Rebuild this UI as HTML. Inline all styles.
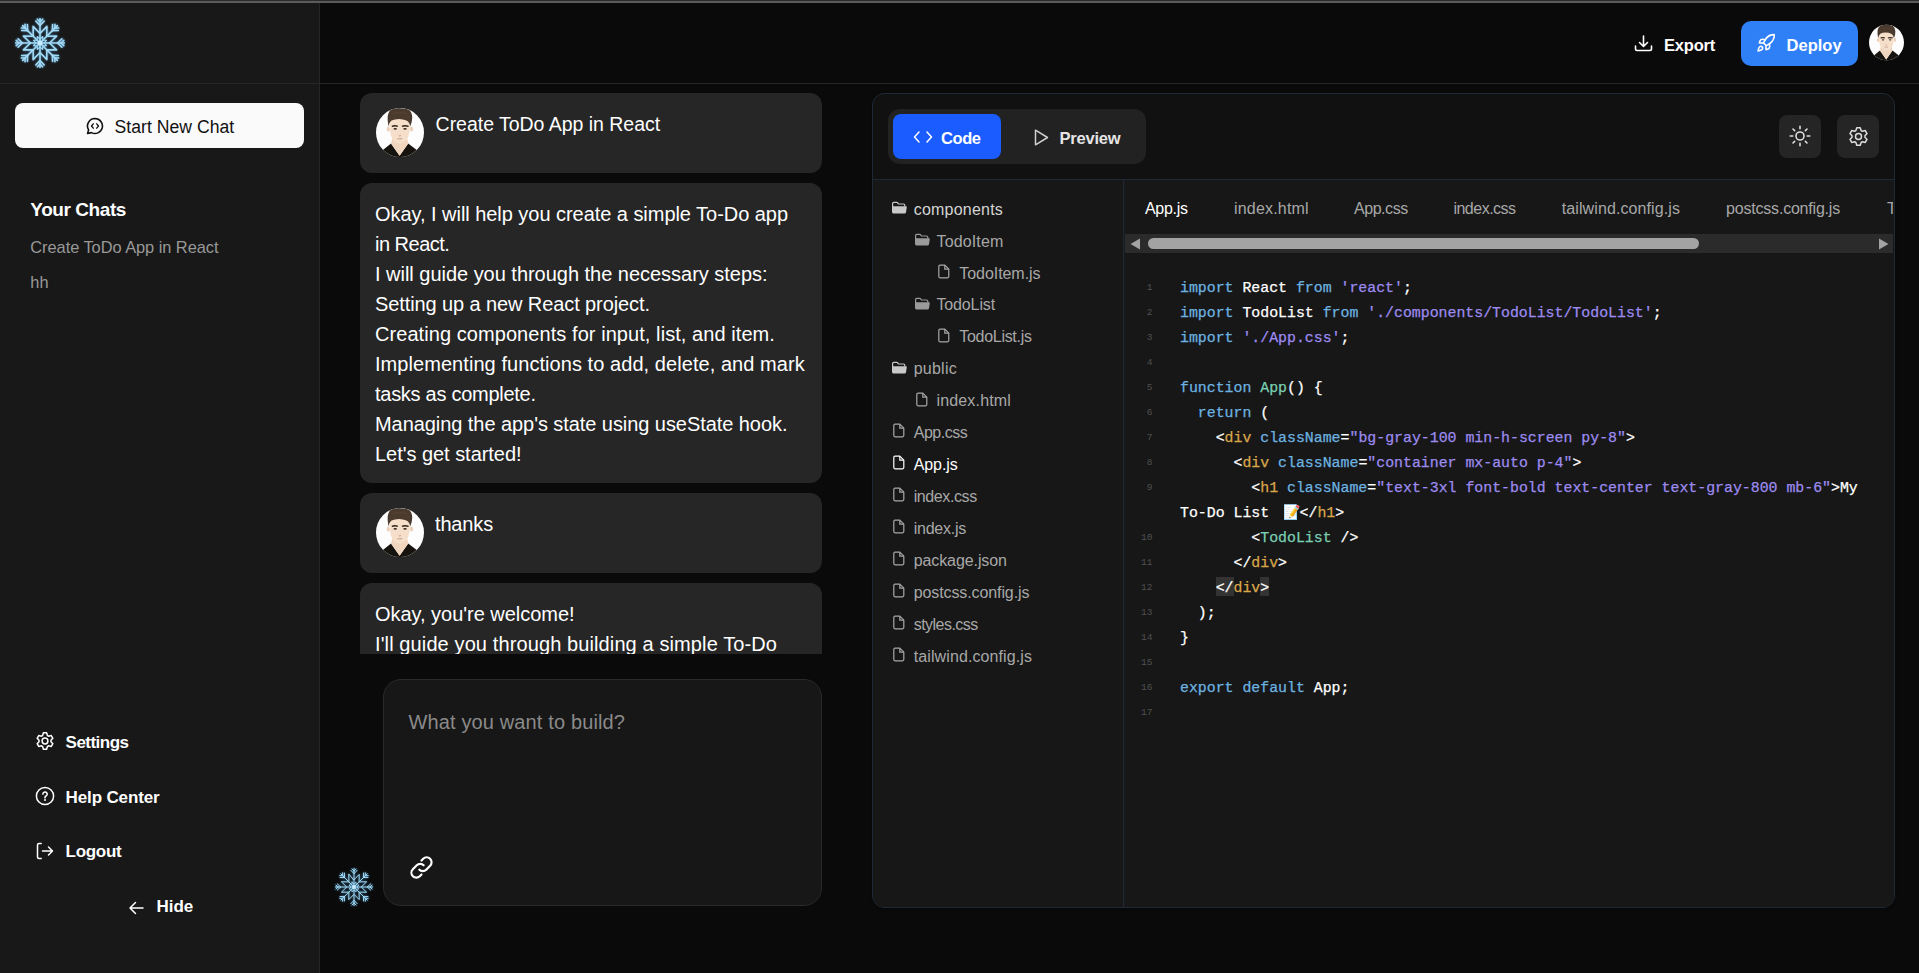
<!DOCTYPE html>
<html><head><meta charset="utf-8"><style>
*{box-sizing:border-box;margin:0;padding:0}
html,body{width:1919px;height:973px;overflow:hidden;background:#0a0a0a;font-family:"Liberation Sans",sans-serif;color:#fff;position:relative}
.abs{position:absolute}
.t{position:absolute;white-space:pre;line-height:1}
.code{position:absolute;left:1180px;font-family:"Liberation Mono",monospace;font-size:14.87px;line-height:25px;white-space:pre;color:#fff;-webkit-text-stroke:0.25px currentColor}
.ln{position:absolute;font-family:"Liberation Mono",monospace;font-size:9.6px;color:#505050;white-space:pre;line-height:1}
.kw{color:#6db3e0}.str{color:#9d8bf0}.tag{color:#d9a74a}.attr{color:#6db3e0}.comp{color:#7ad0b2}
</style></head><body>
<div class="abs" style="left:0px;top:0px;width:1919px;height:1px;background:#2c2c2c;border-radius:0px;"></div>
<div class="abs" style="left:0px;top:1px;width:1919px;height:2px;background:#5b5b5b;border-radius:0px;"></div>
<div class="abs" style="left:0px;top:3px;width:319px;height:970px;background:#181818;border-radius:0px;"></div>
<div class="abs" style="left:319px;top:3px;width:1px;height:970px;background:#262626;border-radius:0px;"></div>
<div class="abs" style="left:0px;top:83px;width:1919px;height:1px;background:#262626;border-radius:0px;"></div>
<svg class="abs" style="left:15.0px;top:18.0px;filter:drop-shadow(0 0 0.8px #4a90c0)" width="50" height="50" viewBox="0 0 50 50" fill="none"><g transform="translate(25.0,25.0) scale(1.0)" stroke="#a3d9f3" stroke-width="1.6" stroke-linecap="round" stroke-linejoin="round"><line x1="0" y1="0" x2="0.00" y2="-24.50"/><line x1="0.00" y1="-17.50" x2="4.12" y2="-21.90"/><line x1="0.00" y1="-17.50" x2="-4.12" y2="-21.90"/><line x1="0.00" y1="-21.00" x2="2.62" y2="-23.80"/><line x1="0.00" y1="-21.00" x2="-2.62" y2="-23.80"/><line x1="0" y1="0" x2="17.32" y2="-17.32"/><line x1="12.37" y1="-12.37" x2="18.40" y2="-12.57"/><line x1="12.37" y1="-12.37" x2="12.57" y2="-18.40"/><line x1="14.85" y1="-14.85" x2="18.69" y2="-14.97"/><line x1="14.85" y1="-14.85" x2="14.97" y2="-18.69"/><line x1="0" y1="0" x2="24.50" y2="-0.00"/><line x1="17.50" y1="-0.00" x2="21.90" y2="4.12"/><line x1="17.50" y1="-0.00" x2="21.90" y2="-4.13"/><line x1="21.00" y1="-0.00" x2="23.80" y2="2.62"/><line x1="21.00" y1="-0.00" x2="23.80" y2="-2.63"/><line x1="0" y1="0" x2="17.32" y2="17.32"/><line x1="12.37" y1="12.37" x2="12.57" y2="18.40"/><line x1="12.37" y1="12.37" x2="18.40" y2="12.57"/><line x1="14.85" y1="14.85" x2="14.97" y2="18.69"/><line x1="14.85" y1="14.85" x2="18.69" y2="14.97"/><line x1="0" y1="0" x2="0.00" y2="24.50"/><line x1="0.00" y1="17.50" x2="-4.12" y2="21.90"/><line x1="0.00" y1="17.50" x2="4.13" y2="21.90"/><line x1="0.00" y1="21.00" x2="-2.62" y2="23.80"/><line x1="0.00" y1="21.00" x2="2.63" y2="23.80"/><line x1="0" y1="0" x2="-17.32" y2="17.32"/><line x1="-12.37" y1="12.37" x2="-18.40" y2="12.57"/><line x1="-12.37" y1="12.37" x2="-12.57" y2="18.40"/><line x1="-14.85" y1="14.85" x2="-18.69" y2="14.97"/><line x1="-14.85" y1="14.85" x2="-14.97" y2="18.69"/><line x1="0" y1="0" x2="-24.50" y2="0.00"/><line x1="-17.50" y1="0.00" x2="-21.90" y2="-4.12"/><line x1="-17.50" y1="0.00" x2="-21.90" y2="4.13"/><line x1="-21.00" y1="0.00" x2="-23.80" y2="-2.62"/><line x1="-21.00" y1="0.00" x2="-23.80" y2="2.63"/><line x1="0" y1="0" x2="-17.32" y2="-17.32"/><line x1="-12.37" y1="-12.37" x2="-12.57" y2="-18.40"/><line x1="-12.37" y1="-12.37" x2="-18.40" y2="-12.57"/><line x1="-14.85" y1="-14.85" x2="-14.97" y2="-18.69"/><line x1="-14.85" y1="-14.85" x2="-18.69" y2="-14.97"/><polygon points="0.00,-9.50 6.89,-16.63 6.72,-6.72 16.63,-6.89 9.50,-0.00 16.63,6.89 6.72,6.72 6.89,16.63 0.00,9.50 -6.89,16.63 -6.72,6.72 -16.63,6.89 -9.50,0.00 -16.63,-6.89 -6.72,-6.72 -6.89,-16.63"/><polygon points="0.00,-4.00 2.68,-6.47 2.83,-2.83 6.47,-2.68 4.00,-0.00 6.47,2.68 2.83,2.83 2.68,6.47 0.00,4.00 -2.68,6.47 -2.83,2.83 -6.47,2.68 -4.00,0.00 -6.47,-2.68 -2.83,-2.83 -2.68,-6.47" stroke-width="1.1"/><circle cx="0" cy="0" r="2.5" fill="#c8ecff" stroke="none"/></g></svg>
<div class="abs" style="left:15px;top:103px;width:289px;height:45px;background:#fafafa;border-radius:8px;"></div>
<svg class="abs" style="left:86px;top:117px;" width="18" height="18" viewBox="0 0 18 18" fill="none"><path d="M9 1.5a7.5 7.5 0 1 1-3.6 14.1L1.6 16.5l1-3.6A7.5 7.5 0 0 1 9 1.5z" stroke="#111" stroke-width="1.6" stroke-linejoin="round"/><path d="M7.3 6.8L5.5 9l1.8 2.2M10.7 6.8L12.5 9l-1.8 2.2" stroke="#111" stroke-width="1.3" stroke-linecap="round" stroke-linejoin="round"/></svg>
<div class="t" id="f0" style="left:114.50px;top:118.80px;font-size:17.6px;color:#111;font-weight:400;letter-spacing:0.031px;">Start New Chat</div>
<div class="t" id="f1" style="left:30.30px;top:199.72px;font-size:19px;color:#fff;font-weight:700;letter-spacing:-0.428px;">Your Chats</div>
<div class="t" id="f2" style="left:30.30px;top:238.92px;font-size:16.4px;color:#989898;font-weight:400;letter-spacing:-0.043px;">Create ToDo App in React</div>
<div class="t" style="left:30.30px;top:274.12px;font-size:16.4px;color:#989898;font-weight:400;letter-spacing:0.000px;">hh</div>
<svg class="abs" style="left:35px;top:731px;" width="20" height="20" viewBox="0 0 20 20" fill="none"><path d="M7.56 4.52 L8.42 1.85 L11.58 1.85 L12.44 4.52 L13.53 5.15 L16.26 4.55 L17.85 7.30 L15.97 9.37 L15.97 10.63 L17.85 12.70 L16.26 15.45 L13.53 14.85 L12.44 15.48 L11.58 18.15 L8.42 18.15 L7.56 15.48 L6.47 14.85 L3.74 15.45 L2.15 12.70 L4.03 10.63 L4.03 9.37 L2.15 7.30 L3.74 4.55 L6.47 5.15Z" stroke="#fff" stroke-width="1.5" stroke-linejoin="round"/><circle cx="10" cy="10" r="2.9" stroke="#fff" stroke-width="1.5"/></svg>
<div class="t" id="f3" style="left:65.60px;top:733.61px;font-size:17px;color:#fff;font-weight:700;letter-spacing:-0.529px;">Settings</div>
<svg class="abs" style="left:35px;top:786px;" width="20" height="20" viewBox="0 0 20 20" fill="none"><circle cx="10" cy="10" r="8.6" stroke="#fff" stroke-width="1.5"/><path d="M7.9 8.1a2.15 2.15 0 1 1 3.1 1.95c-.65.35-1 .8-1 1.45v.35" stroke="#fff" stroke-width="1.6" stroke-linecap="round"/><circle cx="10" cy="14.1" r="1" fill="#fff"/></svg>
<div class="t" id="f4" style="left:65.60px;top:788.61px;font-size:17px;color:#fff;font-weight:700;letter-spacing:-0.140px;">Help Center</div>
<svg class="abs" style="left:35px;top:842px;" width="20" height="18" viewBox="0 0 20 18" fill="none"><path d="M6.2 1.5H4Q2.5 1.5 2.5 3V15Q2.5 16.5 4 16.5H6.2" stroke="#fff" stroke-width="1.5" stroke-linecap="round" stroke-linejoin="round"/><path d="M7.5 9h10M13.5 5l4 4-4 4" stroke="#fff" stroke-width="1.5" stroke-linecap="round" stroke-linejoin="round"/></svg>
<div class="t" id="f5" style="left:65.60px;top:842.61px;font-size:17px;color:#fff;font-weight:700;letter-spacing:-0.300px;">Logout</div>
<svg class="abs" style="left:128px;top:900px;" width="16" height="16" viewBox="0 0 16 16" fill="none"><path d="M15 8H2M7.5 2.5L2 8l5.5 5.5" stroke="#fff" stroke-width="1.5" stroke-linecap="round" stroke-linejoin="round"/></svg>
<div class="t" id="f6" style="left:156.60px;top:898.11px;font-size:17px;color:#fff;font-weight:700;letter-spacing:-0.100px;">Hide</div>
<svg class="abs" style="left:1634px;top:35px;" width="19" height="17" viewBox="0 0 19 17" fill="none"><path d="M9.5 1v10M5.5 7.5l4 4 4-4" stroke="#fff" stroke-width="1.6" stroke-linecap="round" stroke-linejoin="round"/><path d="M1.5 11v2.8q0 1.7 1.7 1.7h12.6q1.7 0 1.7-1.7V11" stroke="#fff" stroke-width="1.6" stroke-linecap="round" stroke-linejoin="round"/></svg>
<div class="t" id="f7" style="left:1664.00px;top:37.03px;font-size:16.5px;color:#fff;font-weight:700;letter-spacing:-0.200px;">Export</div>
<div class="abs" style="left:1741px;top:21px;width:117px;height:45px;background:#2f80f7;border-radius:10px;"></div>
<svg class="abs" style="left:1756px;top:33px;" width="20" height="20" viewBox="0 0 24 24" fill="none"><g stroke="#fff" stroke-width="1.9" stroke-linecap="round" stroke-linejoin="round"><path d="M4.5 16.5c-1.5 1.26-2 5-2 5s3.74-.5 5-2c.71-.84.7-2.13-.09-2.91a2.18 2.18 0 0 0-2.91-.09z"/><path d="m12 15-3-3a22 22 0 0 1 2-3.95A12.88 12.88 0 0 1 22 2c0 2.72-.78 7.5-6 11a22.35 22.35 0 0 1-4 2z"/><path d="M9 12H4s.55-3.03 2-4c1.62-1.08 5 0 5 0"/><path d="M12 15v5s3.03-.55 4-2c1.08-1.62 0-5 0-5"/></g></svg>
<div class="t" id="f8" style="left:1786.60px;top:37.03px;font-size:16.5px;color:#fff;font-weight:700;letter-spacing:0.000px;">Deploy</div>
<svg class="abs" style="left:1869px;top:23.5px;" width="35" height="37" viewBox="0 0 48 49" fill="none"><defs><clipPath id="a1869_23"><ellipse cx="24" cy="24.5" rx="24" ry="24.5"/></clipPath></defs>
<ellipse cx="24" cy="24.5" rx="24" ry="24.5" fill="#fdfdfd"/>
<g clip-path="url(#a1869_23)">
<path d="M-2 52 L1 44 Q4 42.8 6.3 42.5 L15 35.6 L23.6 47.7 L32.2 35.6 L41.4 42.5 Q44 42.8 47 44 L50 52 Z" fill="#17140f"/>
<path d="M16.5 29 L31 29 L32.2 35.6 L23.6 47.7 L15 35.6 Z" fill="#f0d6bf"/>
<ellipse cx="12.3" cy="21" rx="1.6" ry="2.6" fill="#ecd0b8"/><ellipse cx="35.6" cy="21" rx="1.6" ry="2.6" fill="#ecd0b8"/>
<path d="M13.4 9 Q13 26 16.7 31.6 Q19.5 35.6 23.6 35.8 Q27.8 35.6 31 31.6 Q34.6 26 34.2 9 Z" fill="#f5dfcb"/>
<path d="M12.6 18.5 Q11.2 12 11.8 7.5 Q13 2.5 16 1.1 Q20 -0.3 24.7 0.3 Q29.5 0.3 32.8 1.7 Q36 4 36.2 9.2 Q36.4 13.5 34.2 18.5 Q33.8 14.5 30.5 12.6 Q27 10.9 23 10.9 Q18.5 11 15.5 12.6 Q13.2 14.2 12.6 18.5 Z" fill="#4b3a2e"/>
<path d="M17 6 Q22 3.5 30 5.5" stroke="#5e4a3c" stroke-width="0.7" fill="none"/>
<path d="M15.8 18.4 Q18.8 17.3 21.8 18.3 M25.9 18.3 Q29 17.3 32.6 18.4" stroke="#2e2119" stroke-width="1.4" fill="none"/>
<ellipse cx="19.2" cy="20.8" rx="1.8" ry="0.85" fill="#3a2a20"/><ellipse cx="29" cy="20.8" rx="1.8" ry="0.85" fill="#3a2a20"/>
<path d="M22.8 27.6 Q23.8 28.4 24.8 27.6 M21.4 30.6 Q23.8 31.3 26.2 30.6" stroke="#b08a78" stroke-width="0.8" fill="none"/>
</g></svg>
<div class="abs" style="left:360px;top:93px;width:462px;height:80px;background:#262626;border-radius:12px;"></div>
<svg class="abs" style="left:376px;top:108px;" width="48" height="49" viewBox="0 0 48 49" fill="none"><defs><clipPath id="a376_108"><ellipse cx="24" cy="24.5" rx="24" ry="24.5"/></clipPath></defs>
<ellipse cx="24" cy="24.5" rx="24" ry="24.5" fill="#fdfdfd"/>
<g clip-path="url(#a376_108)">
<path d="M-2 52 L1 44 Q4 42.8 6.3 42.5 L15 35.6 L23.6 47.7 L32.2 35.6 L41.4 42.5 Q44 42.8 47 44 L50 52 Z" fill="#17140f"/>
<path d="M16.5 29 L31 29 L32.2 35.6 L23.6 47.7 L15 35.6 Z" fill="#f0d6bf"/>
<ellipse cx="12.3" cy="21" rx="1.6" ry="2.6" fill="#ecd0b8"/><ellipse cx="35.6" cy="21" rx="1.6" ry="2.6" fill="#ecd0b8"/>
<path d="M13.4 9 Q13 26 16.7 31.6 Q19.5 35.6 23.6 35.8 Q27.8 35.6 31 31.6 Q34.6 26 34.2 9 Z" fill="#f5dfcb"/>
<path d="M12.6 18.5 Q11.2 12 11.8 7.5 Q13 2.5 16 1.1 Q20 -0.3 24.7 0.3 Q29.5 0.3 32.8 1.7 Q36 4 36.2 9.2 Q36.4 13.5 34.2 18.5 Q33.8 14.5 30.5 12.6 Q27 10.9 23 10.9 Q18.5 11 15.5 12.6 Q13.2 14.2 12.6 18.5 Z" fill="#4b3a2e"/>
<path d="M17 6 Q22 3.5 30 5.5" stroke="#5e4a3c" stroke-width="0.7" fill="none"/>
<path d="M15.8 18.4 Q18.8 17.3 21.8 18.3 M25.9 18.3 Q29 17.3 32.6 18.4" stroke="#2e2119" stroke-width="1.4" fill="none"/>
<ellipse cx="19.2" cy="20.8" rx="1.8" ry="0.85" fill="#3a2a20"/><ellipse cx="29" cy="20.8" rx="1.8" ry="0.85" fill="#3a2a20"/>
<path d="M22.8 27.6 Q23.8 28.4 24.8 27.6 M21.4 30.6 Q23.8 31.3 26.2 30.6" stroke="#b08a78" stroke-width="0.8" fill="none"/>
</g></svg>
<div class="t" id="f9" style="left:435.60px;top:115.49px;font-size:19.5px;color:#fff;font-weight:400;letter-spacing:-0.026px;">Create ToDo App in React</div>
<div class="abs" style="left:360px;top:183px;width:462px;height:300px;background:#262626;border-radius:12px;"></div>
<div class="t" id="f10" style="left:375.00px;top:204.07px;font-size:20px;color:#fff;font-weight:400;letter-spacing:-0.043px;">Okay, I will help you create a simple To-Do app</div>
<div class="t" id="f11" style="left:375.00px;top:234.07px;font-size:20px;color:#fff;font-weight:400;letter-spacing:-0.500px;">in React.</div>
<div class="t" id="f12" style="left:375.00px;top:264.07px;font-size:20px;color:#fff;font-weight:400;letter-spacing:-0.023px;">I will guide you through the necessary steps:</div>
<div class="t" id="f13" style="left:375.00px;top:294.07px;font-size:20px;color:#fff;font-weight:400;letter-spacing:-0.100px;">Setting up a new React project.</div>
<div class="t" id="f14" style="left:375.00px;top:324.07px;font-size:20px;color:#fff;font-weight:400;letter-spacing:0.067px;">Creating components for input, list, and item.</div>
<div class="t" id="f15" style="left:375.00px;top:354.07px;font-size:20px;color:#fff;font-weight:400;letter-spacing:0.061px;">Implementing functions to add, delete, and mark</div>
<div class="t" id="f16" style="left:375.00px;top:384.07px;font-size:20px;color:#fff;font-weight:400;letter-spacing:-0.271px;">tasks as complete.</div>
<div class="t" id="f17" style="left:375.00px;top:414.07px;font-size:20px;color:#fff;font-weight:400;letter-spacing:-0.062px;">Managing the app&#39;s state using useState hook.</div>
<div class="t" id="f18" style="left:375.00px;top:444.07px;font-size:20px;color:#fff;font-weight:400;letter-spacing:-0.038px;">Let&#39;s get started!</div>
<div class="abs" style="left:360px;top:493px;width:462px;height:80px;background:#262626;border-radius:12px;"></div>
<svg class="abs" style="left:376px;top:508px;" width="48" height="49" viewBox="0 0 48 49" fill="none"><defs><clipPath id="a376_508"><ellipse cx="24" cy="24.5" rx="24" ry="24.5"/></clipPath></defs>
<ellipse cx="24" cy="24.5" rx="24" ry="24.5" fill="#fdfdfd"/>
<g clip-path="url(#a376_508)">
<path d="M-2 52 L1 44 Q4 42.8 6.3 42.5 L15 35.6 L23.6 47.7 L32.2 35.6 L41.4 42.5 Q44 42.8 47 44 L50 52 Z" fill="#17140f"/>
<path d="M16.5 29 L31 29 L32.2 35.6 L23.6 47.7 L15 35.6 Z" fill="#f0d6bf"/>
<ellipse cx="12.3" cy="21" rx="1.6" ry="2.6" fill="#ecd0b8"/><ellipse cx="35.6" cy="21" rx="1.6" ry="2.6" fill="#ecd0b8"/>
<path d="M13.4 9 Q13 26 16.7 31.6 Q19.5 35.6 23.6 35.8 Q27.8 35.6 31 31.6 Q34.6 26 34.2 9 Z" fill="#f5dfcb"/>
<path d="M12.6 18.5 Q11.2 12 11.8 7.5 Q13 2.5 16 1.1 Q20 -0.3 24.7 0.3 Q29.5 0.3 32.8 1.7 Q36 4 36.2 9.2 Q36.4 13.5 34.2 18.5 Q33.8 14.5 30.5 12.6 Q27 10.9 23 10.9 Q18.5 11 15.5 12.6 Q13.2 14.2 12.6 18.5 Z" fill="#4b3a2e"/>
<path d="M17 6 Q22 3.5 30 5.5" stroke="#5e4a3c" stroke-width="0.7" fill="none"/>
<path d="M15.8 18.4 Q18.8 17.3 21.8 18.3 M25.9 18.3 Q29 17.3 32.6 18.4" stroke="#2e2119" stroke-width="1.4" fill="none"/>
<ellipse cx="19.2" cy="20.8" rx="1.8" ry="0.85" fill="#3a2a20"/><ellipse cx="29" cy="20.8" rx="1.8" ry="0.85" fill="#3a2a20"/>
<path d="M22.8 27.6 Q23.8 28.4 24.8 27.6 M21.4 30.6 Q23.8 31.3 26.2 30.6" stroke="#b08a78" stroke-width="0.8" fill="none"/>
</g></svg>
<div class="t" id="f19" style="left:435.00px;top:514.07px;font-size:20px;color:#fff;font-weight:400;letter-spacing:-0.160px;">thanks</div>
<div class="abs" style="left:360px;top:583px;width:462px;height:71px;overflow:hidden"><div class="abs" style="left:0;top:0;width:462px;height:120px;background:#262626;border-radius:12px"></div><div class="t" id="f20" style="left:15.00px;top:21.47px;font-size:20px;color:#fff;font-weight:400;letter-spacing:-0.033px;">Okay, you&#39;re welcome!</div><div class="t" id="f21" style="left:15.00px;top:51.37px;font-size:20px;color:#fff;font-weight:400;letter-spacing:0.110px;">I&#39;ll guide you through building a simple To-Do</div></div>
<div class="abs" style="left:383px;top:679px;width:439px;height:227px;background:#171717;border-radius:18px;border:1px solid #2a2a2a"></div>
<div class="t" id="f22" style="left:408.50px;top:711.57px;font-size:20px;color:#8a8a8a;font-weight:400;letter-spacing:0.136px;">What you want to build?</div>
<svg class="abs" style="left:407.8px;top:853.8px;" width="27" height="27" viewBox="0 0 25 25" fill="none"><path d="M10.5 14.5a4.5 4.5 0 0 0 6.4 0l3.6-3.6a4.5 4.5 0 0 0-6.4-6.4l-1.6 1.6" stroke="#fff" stroke-width="2" stroke-linecap="round"/><path d="M14.5 10.5a4.5 4.5 0 0 0-6.4 0l-3.6 3.6a4.5 4.5 0 0 0 6.4 6.4l1.6-1.6" stroke="#fff" stroke-width="2" stroke-linecap="round"/></svg>
<svg class="abs" style="left:335.0px;top:868.0px;filter:drop-shadow(0 0 0.8px #4a90c0)" width="38" height="38" viewBox="0 0 38 38" fill="none"><g transform="translate(19.0,19.0) scale(0.76)" stroke="#a3d9f3" stroke-width="1.3" stroke-linecap="round" stroke-linejoin="round"><line x1="0" y1="0" x2="0.00" y2="-24.50"/><line x1="0.00" y1="-17.50" x2="4.12" y2="-21.90"/><line x1="0.00" y1="-17.50" x2="-4.12" y2="-21.90"/><line x1="0.00" y1="-21.00" x2="2.62" y2="-23.80"/><line x1="0.00" y1="-21.00" x2="-2.62" y2="-23.80"/><line x1="0" y1="0" x2="17.32" y2="-17.32"/><line x1="12.37" y1="-12.37" x2="18.40" y2="-12.57"/><line x1="12.37" y1="-12.37" x2="12.57" y2="-18.40"/><line x1="14.85" y1="-14.85" x2="18.69" y2="-14.97"/><line x1="14.85" y1="-14.85" x2="14.97" y2="-18.69"/><line x1="0" y1="0" x2="24.50" y2="-0.00"/><line x1="17.50" y1="-0.00" x2="21.90" y2="4.12"/><line x1="17.50" y1="-0.00" x2="21.90" y2="-4.13"/><line x1="21.00" y1="-0.00" x2="23.80" y2="2.62"/><line x1="21.00" y1="-0.00" x2="23.80" y2="-2.63"/><line x1="0" y1="0" x2="17.32" y2="17.32"/><line x1="12.37" y1="12.37" x2="12.57" y2="18.40"/><line x1="12.37" y1="12.37" x2="18.40" y2="12.57"/><line x1="14.85" y1="14.85" x2="14.97" y2="18.69"/><line x1="14.85" y1="14.85" x2="18.69" y2="14.97"/><line x1="0" y1="0" x2="0.00" y2="24.50"/><line x1="0.00" y1="17.50" x2="-4.12" y2="21.90"/><line x1="0.00" y1="17.50" x2="4.13" y2="21.90"/><line x1="0.00" y1="21.00" x2="-2.62" y2="23.80"/><line x1="0.00" y1="21.00" x2="2.63" y2="23.80"/><line x1="0" y1="0" x2="-17.32" y2="17.32"/><line x1="-12.37" y1="12.37" x2="-18.40" y2="12.57"/><line x1="-12.37" y1="12.37" x2="-12.57" y2="18.40"/><line x1="-14.85" y1="14.85" x2="-18.69" y2="14.97"/><line x1="-14.85" y1="14.85" x2="-14.97" y2="18.69"/><line x1="0" y1="0" x2="-24.50" y2="0.00"/><line x1="-17.50" y1="0.00" x2="-21.90" y2="-4.12"/><line x1="-17.50" y1="0.00" x2="-21.90" y2="4.13"/><line x1="-21.00" y1="0.00" x2="-23.80" y2="-2.62"/><line x1="-21.00" y1="0.00" x2="-23.80" y2="2.63"/><line x1="0" y1="0" x2="-17.32" y2="-17.32"/><line x1="-12.37" y1="-12.37" x2="-12.57" y2="-18.40"/><line x1="-12.37" y1="-12.37" x2="-18.40" y2="-12.57"/><line x1="-14.85" y1="-14.85" x2="-14.97" y2="-18.69"/><line x1="-14.85" y1="-14.85" x2="-18.69" y2="-14.97"/><polygon points="0.00,-9.50 6.89,-16.63 6.72,-6.72 16.63,-6.89 9.50,-0.00 16.63,6.89 6.72,6.72 6.89,16.63 0.00,9.50 -6.89,16.63 -6.72,6.72 -16.63,6.89 -9.50,0.00 -16.63,-6.89 -6.72,-6.72 -6.89,-16.63"/><polygon points="0.00,-4.00 2.68,-6.47 2.83,-2.83 6.47,-2.68 4.00,-0.00 6.47,2.68 2.83,2.83 2.68,6.47 0.00,4.00 -2.68,6.47 -2.83,2.83 -6.47,2.68 -4.00,0.00 -6.47,-2.68 -2.83,-2.83 -2.68,-6.47" stroke-width="1.1"/><circle cx="0" cy="0" r="2.5" fill="#c8ecff" stroke="none"/></g></svg>
<div class="abs" style="left:872px;top:93px;width:1023px;height:815px;background:#111111;border-radius:12px;border:1px solid #1e2836;box-shadow:0 1px 3px rgba(0,0,0,.3)"></div>
<div class="abs" style="left:873px;top:180px;width:1021px;height:727px;background:#171717;border-radius:0px;border-radius:0 0 11px 11px"></div>
<div class="abs" style="left:873px;top:179px;width:1021px;height:1px;background:#1e2836;border-radius:0px;"></div>
<div class="abs" style="left:1123px;top:180px;width:1px;height:727px;background:#1e2836;border-radius:0px;"></div>
<div class="abs" style="left:1124px;top:180px;width:1px;height:727px;background:#1b1a19;border-radius:0px;"></div>
<div class="abs" style="left:888px;top:109px;width:258px;height:55px;background:#222222;border-radius:12px;"></div>
<div class="abs" style="left:893px;top:114px;width:108px;height:45px;background:#1a5cff;border-radius:8px;"></div>
<svg class="abs" style="left:913px;top:131px;" width="20" height="12" viewBox="0 0 20 12" fill="none"><path d="M6 1L1.5 6 6 11M14 1l4.5 5L14 11" stroke="#fff" stroke-width="1.5" stroke-linecap="round" stroke-linejoin="round"/></svg>
<div class="t" id="f23" style="left:941.00px;top:129.93px;font-size:16.5px;color:#fff;font-weight:700;letter-spacing:-0.400px;">Code</div>
<svg class="abs" style="left:1034px;top:129px;" width="15" height="17" viewBox="0 0 15 17" fill="none"><path d="M1.5 1.2v14.6L13.5 8.5z" stroke="#d0d0d0" stroke-width="1.5" stroke-linejoin="round"/></svg>
<div class="t" id="f24" style="left:1059.60px;top:129.93px;font-size:16.5px;color:#e5e5e5;font-weight:700;letter-spacing:-0.233px;">Preview</div>
<div class="abs" style="left:1779px;top:115px;width:42px;height:43px;background:#252525;border-radius:8px;"></div>
<svg class="abs" style="left:1789px;top:125px;" width="22" height="22" viewBox="0 0 22 22" fill="none"><circle cx="11" cy="11" r="4" stroke="#ddd" stroke-width="1.6"/><path d="M11 1.2v2.6M11 18.2v2.6M1.2 11h2.6M18.2 11h2.6M4 4l1.6 1.6M16.4 16.4L18 18M4 18l1.6-1.6M16.4 5.6L18 4" stroke="#ddd" stroke-width="1.6" stroke-linecap="round"/></svg>
<div class="abs" style="left:1837px;top:115px;width:42px;height:43px;background:#252525;border-radius:8px;"></div>
<svg class="abs" style="left:1848px;top:126px;" width="21" height="21" viewBox="0 0 21 21" fill="none"><path d="M7.86 4.56 L8.78 1.67 L12.22 1.67 L13.14 4.56 L14.32 5.24 L17.29 4.60 L19.01 7.57 L16.96 9.82 L16.96 11.18 L19.01 13.43 L17.29 16.40 L14.32 15.76 L13.14 16.44 L12.22 19.33 L8.78 19.33 L7.86 16.44 L6.68 15.76 L3.71 16.40 L1.99 13.43 L4.04 11.18 L4.04 9.82 L1.99 7.57 L3.71 4.60 L6.68 5.24Z" stroke="#ddd" stroke-width="1.5" stroke-linejoin="round"/><circle cx="10.5" cy="10.5" r="3.0" stroke="#ddd" stroke-width="1.5"/></svg>
<svg class="abs" style="left:891.4000000000001px;top:201.0px;" width="17" height="14" viewBox="0 0 17 14" fill="none"><path d="M1.6 8V2.6Q1.6 1.4 2.8 1.4H5.6Q6.4 1.4 6.9 2.1L7.5 3H12.6Q13.8 3 13.8 4.2V5.6" stroke="#c8c8c8" stroke-width="1.2" stroke-linejoin="round"/><path d="M1 5.2H15Q16 5.2 15.8 6.3L15 11.2Q14.8 12.4 13.6 12.4H2.4Q1 12.4 1 11V5.2Z" fill="#c8c8c8"/></svg>
<div class="t" id="f25" style="left:913.70px;top:201.66px;font-size:16px;color:#d4d4d4;font-weight:400;letter-spacing:0.222px;">components</div>
<svg class="abs" style="left:914.2px;top:232.94px;" width="17" height="14" viewBox="0 0 17 14" fill="none"><path d="M1.6 8V2.6Q1.6 1.4 2.8 1.4H5.6Q6.4 1.4 6.9 2.1L7.5 3H12.6Q13.8 3 13.8 4.2V5.6" stroke="#9a9a9a" stroke-width="1.2" stroke-linejoin="round"/><path d="M1 5.2H15Q16 5.2 15.8 6.3L15 11.2Q14.8 12.4 13.6 12.4H2.4Q1 12.4 1 11V5.2Z" fill="#9a9a9a"/></svg>
<div class="t" id="f26" style="left:936.50px;top:233.60px;font-size:16px;color:#a8a8a8;font-weight:400;letter-spacing:0.143px;">TodoItem</div>
<svg class="abs" style="left:937.3000000000001px;top:263.78px;" width="14" height="15" viewBox="0 0 14 15" fill="none"><path d="M3 1.2H7.8L11.8 5.2V12.6Q11.8 13.8 10.6 13.8H3Q1.8 13.8 1.8 12.6V2.4Q1.8 1.2 3 1.2Z" stroke="#a8a8a8" stroke-width="1.2" stroke-linejoin="round"/><path d="M7.8 1.2V5.2H11.8" stroke="#a8a8a8" stroke-width="1.2" stroke-linejoin="round"/></svg>
<div class="t" id="f27" style="left:959.30px;top:265.54px;font-size:16px;color:#a8a8a8;font-weight:400;letter-spacing:-0.060px;">TodoItem.js</div>
<svg class="abs" style="left:914.2px;top:296.82px;" width="17" height="14" viewBox="0 0 17 14" fill="none"><path d="M1.6 8V2.6Q1.6 1.4 2.8 1.4H5.6Q6.4 1.4 6.9 2.1L7.5 3H12.6Q13.8 3 13.8 4.2V5.6" stroke="#9a9a9a" stroke-width="1.2" stroke-linejoin="round"/><path d="M1 5.2H15Q16 5.2 15.8 6.3L15 11.2Q14.8 12.4 13.6 12.4H2.4Q1 12.4 1 11V5.2Z" fill="#9a9a9a"/></svg>
<div class="t" id="f28" style="left:936.50px;top:297.48px;font-size:16px;color:#a8a8a8;font-weight:400;letter-spacing:-0.143px;">TodoList</div>
<svg class="abs" style="left:937.3000000000001px;top:327.65999999999997px;" width="14" height="15" viewBox="0 0 14 15" fill="none"><path d="M3 1.2H7.8L11.8 5.2V12.6Q11.8 13.8 10.6 13.8H3Q1.8 13.8 1.8 12.6V2.4Q1.8 1.2 3 1.2Z" stroke="#a8a8a8" stroke-width="1.2" stroke-linejoin="round"/><path d="M7.8 1.2V5.2H11.8" stroke="#a8a8a8" stroke-width="1.2" stroke-linejoin="round"/></svg>
<div class="t" id="f29" style="left:959.30px;top:329.42px;font-size:16px;color:#a8a8a8;font-weight:400;letter-spacing:-0.300px;">TodoList.js</div>
<svg class="abs" style="left:891.4000000000001px;top:360.7px;" width="17" height="14" viewBox="0 0 17 14" fill="none"><path d="M1.6 8V2.6Q1.6 1.4 2.8 1.4H5.6Q6.4 1.4 6.9 2.1L7.5 3H12.6Q13.8 3 13.8 4.2V5.6" stroke="#c8c8c8" stroke-width="1.2" stroke-linejoin="round"/><path d="M1 5.2H15Q16 5.2 15.8 6.3L15 11.2Q14.8 12.4 13.6 12.4H2.4Q1 12.4 1 11V5.2Z" fill="#c8c8c8"/></svg>
<div class="t" id="f30" style="left:913.70px;top:361.36px;font-size:16px;color:#a8a8a8;font-weight:400;letter-spacing:0.240px;">public</div>
<svg class="abs" style="left:914.5px;top:391.54px;" width="14" height="15" viewBox="0 0 14 15" fill="none"><path d="M3 1.2H7.8L11.8 5.2V12.6Q11.8 13.8 10.6 13.8H3Q1.8 13.8 1.8 12.6V2.4Q1.8 1.2 3 1.2Z" stroke="#a8a8a8" stroke-width="1.2" stroke-linejoin="round"/><path d="M7.8 1.2V5.2H11.8" stroke="#a8a8a8" stroke-width="1.2" stroke-linejoin="round"/></svg>
<div class="t" id="f31" style="left:936.50px;top:393.30px;font-size:16px;color:#a8a8a8;font-weight:400;letter-spacing:0.156px;">index.html</div>
<svg class="abs" style="left:891.7px;top:423.47999999999996px;" width="14" height="15" viewBox="0 0 14 15" fill="none"><path d="M3 1.2H7.8L11.8 5.2V12.6Q11.8 13.8 10.6 13.8H3Q1.8 13.8 1.8 12.6V2.4Q1.8 1.2 3 1.2Z" stroke="#a8a8a8" stroke-width="1.2" stroke-linejoin="round"/><path d="M7.8 1.2V5.2H11.8" stroke="#a8a8a8" stroke-width="1.2" stroke-linejoin="round"/></svg>
<div class="t" id="f32" style="left:913.70px;top:425.24px;font-size:16px;color:#a8a8a8;font-weight:400;letter-spacing:-0.467px;">App.css</div>
<svg class="abs" style="left:891.7px;top:455.42px;" width="14" height="15" viewBox="0 0 14 15" fill="none"><path d="M3 1.2H7.8L11.8 5.2V12.6Q11.8 13.8 10.6 13.8H3Q1.8 13.8 1.8 12.6V2.4Q1.8 1.2 3 1.2Z" stroke="#ffffff" stroke-width="1.2" stroke-linejoin="round"/><path d="M7.8 1.2V5.2H11.8" stroke="#ffffff" stroke-width="1.2" stroke-linejoin="round"/></svg>
<div class="t" id="f33" style="left:913.70px;top:457.18px;font-size:16px;color:#ffffff;font-weight:400;letter-spacing:-0.080px;">App.js</div>
<svg class="abs" style="left:891.7px;top:487.36px;" width="14" height="15" viewBox="0 0 14 15" fill="none"><path d="M3 1.2H7.8L11.8 5.2V12.6Q11.8 13.8 10.6 13.8H3Q1.8 13.8 1.8 12.6V2.4Q1.8 1.2 3 1.2Z" stroke="#a8a8a8" stroke-width="1.2" stroke-linejoin="round"/><path d="M7.8 1.2V5.2H11.8" stroke="#a8a8a8" stroke-width="1.2" stroke-linejoin="round"/></svg>
<div class="t" id="f34" style="left:913.70px;top:489.12px;font-size:16px;color:#a8a8a8;font-weight:400;letter-spacing:-0.400px;">index.css</div>
<svg class="abs" style="left:891.7px;top:519.3000000000001px;" width="14" height="15" viewBox="0 0 14 15" fill="none"><path d="M3 1.2H7.8L11.8 5.2V12.6Q11.8 13.8 10.6 13.8H3Q1.8 13.8 1.8 12.6V2.4Q1.8 1.2 3 1.2Z" stroke="#a8a8a8" stroke-width="1.2" stroke-linejoin="round"/><path d="M7.8 1.2V5.2H11.8" stroke="#a8a8a8" stroke-width="1.2" stroke-linejoin="round"/></svg>
<div class="t" id="f35" style="left:913.70px;top:521.06px;font-size:16px;color:#a8a8a8;font-weight:400;letter-spacing:-0.229px;">index.js</div>
<svg class="abs" style="left:891.7px;top:551.24px;" width="14" height="15" viewBox="0 0 14 15" fill="none"><path d="M3 1.2H7.8L11.8 5.2V12.6Q11.8 13.8 10.6 13.8H3Q1.8 13.8 1.8 12.6V2.4Q1.8 1.2 3 1.2Z" stroke="#a8a8a8" stroke-width="1.2" stroke-linejoin="round"/><path d="M7.8 1.2V5.2H11.8" stroke="#a8a8a8" stroke-width="1.2" stroke-linejoin="round"/></svg>
<div class="t" id="f36" style="left:913.70px;top:553.00px;font-size:16px;color:#a8a8a8;font-weight:400;letter-spacing:-0.091px;">package.json</div>
<svg class="abs" style="left:891.7px;top:583.1800000000001px;" width="14" height="15" viewBox="0 0 14 15" fill="none"><path d="M3 1.2H7.8L11.8 5.2V12.6Q11.8 13.8 10.6 13.8H3Q1.8 13.8 1.8 12.6V2.4Q1.8 1.2 3 1.2Z" stroke="#a8a8a8" stroke-width="1.2" stroke-linejoin="round"/><path d="M7.8 1.2V5.2H11.8" stroke="#a8a8a8" stroke-width="1.2" stroke-linejoin="round"/></svg>
<div class="t" id="f37" style="left:913.70px;top:584.94px;font-size:16px;color:#a8a8a8;font-weight:400;letter-spacing:-0.100px;">postcss.config.js</div>
<svg class="abs" style="left:891.7px;top:615.1200000000001px;" width="14" height="15" viewBox="0 0 14 15" fill="none"><path d="M3 1.2H7.8L11.8 5.2V12.6Q11.8 13.8 10.6 13.8H3Q1.8 13.8 1.8 12.6V2.4Q1.8 1.2 3 1.2Z" stroke="#a8a8a8" stroke-width="1.2" stroke-linejoin="round"/><path d="M7.8 1.2V5.2H11.8" stroke="#a8a8a8" stroke-width="1.2" stroke-linejoin="round"/></svg>
<div class="t" id="f38" style="left:913.70px;top:616.88px;font-size:16px;color:#a8a8a8;font-weight:400;letter-spacing:-0.533px;">styles.css</div>
<svg class="abs" style="left:891.7px;top:647.0600000000001px;" width="14" height="15" viewBox="0 0 14 15" fill="none"><path d="M3 1.2H7.8L11.8 5.2V12.6Q11.8 13.8 10.6 13.8H3Q1.8 13.8 1.8 12.6V2.4Q1.8 1.2 3 1.2Z" stroke="#a8a8a8" stroke-width="1.2" stroke-linejoin="round"/><path d="M7.8 1.2V5.2H11.8" stroke="#a8a8a8" stroke-width="1.2" stroke-linejoin="round"/></svg>
<div class="t" id="f39" style="left:913.70px;top:648.82px;font-size:16px;color:#a8a8a8;font-weight:400;letter-spacing:0.106px;">tailwind.config.js</div>
<div class="abs" style="left:1125px;top:180px;width:768px;height:54px;overflow:hidden"><div class="t" id="f40" style="left:20.00px;top:21.46px;font-size:16px;color:#ffffff;font-weight:400;letter-spacing:-0.300px;">App.js</div><div class="t" id="f41" style="left:109.00px;top:21.46px;font-size:16px;color:#a8a8a8;font-weight:400;letter-spacing:0.189px;">index.html</div><div class="t" id="f42" style="left:229.00px;top:21.46px;font-size:16px;color:#a8a8a8;font-weight:400;letter-spacing:-0.450px;">App.css</div><div class="t" id="f43" style="left:328.40px;top:21.46px;font-size:16px;color:#a8a8a8;font-weight:400;letter-spacing:-0.500px;">index.css</div><div class="t" id="f44" style="left:436.70px;top:21.46px;font-size:16px;color:#a8a8a8;font-weight:400;letter-spacing:0.106px;">tailwind.config.js</div><div class="t" id="f45" style="left:601.10px;top:21.46px;font-size:16px;color:#a8a8a8;font-weight:400;letter-spacing:-0.206px;">postcss.config.js</div><div class="t" style="left:762.10px;top:21.46px;font-size:16px;color:#a8a8a8;font-weight:400;letter-spacing:0.000px;">T</div></div>
<div class="abs" style="left:1125px;top:234px;width:768px;height:19px;background:#2b2b2b;border-radius:0px;"></div>
<div class="abs" style="left:1148px;top:238px;width:551px;height:11px;background:#a3a3a3;border-radius:6px;"></div>
<svg class="abs" style="left:1130px;top:238px;" width="11" height="12" viewBox="0 0 11 12" fill="none"><path d="M10 0.5v11L0.5 6z" fill="#a3a3a3"/></svg>
<svg class="abs" style="left:1878px;top:238px;" width="11" height="12" viewBox="0 0 11 12" fill="none"><path d="M1 0.5v11L10.5 6z" fill="#a3a3a3"/></svg>
<div class="abs" style="left:1215.7px;top:577px;width:17.9px;height:19px;background:#333333;border-radius:0px;"></div>
<div class="abs" style="left:1260.3px;top:577px;width:8.9px;height:19px;background:#333333;border-radius:0px;"></div>
<div class="code" style="top:275.5px"><span class="kw">import</span> React <span class="kw">from</span> <span class="str">'react'</span>;
<span class="kw">import</span> TodoList <span class="kw">from</span> <span class="str">'./components/TodoList/TodoList'</span>;
<span class="kw">import</span> <span class="str">'./App.css'</span>;

<span class="kw">function</span> <span class="comp">App</span>() {
  <span class="kw">return</span> (
    &lt;<span class="tag">div</span> <span class="attr">className</span>=<span class="str">"bg-gray-100 min-h-screen py-8"</span>&gt;
      &lt;<span class="tag">div</span> <span class="attr">className</span>=<span class="str">"container mx-auto p-4"</span>&gt;
        &lt;<span class="tag">h1</span> <span class="attr">className</span>=<span class="str">"text-3xl font-bold text-center text-gray-800 mb-6"</span>&gt;My
To-Do List <span style="display:inline-block;width:21.5px;padding-left:4.5px;font-size:14px;vertical-align:top">📝</span>&lt;/<span class="tag">h1</span>&gt;
        &lt;<span class="comp">TodoList</span> /&gt;
      &lt;/<span class="tag">div</span>&gt;
    &lt;/<span class="tag">div</span>&gt;
  );
}

<span class="kw">export</span> <span class="kw">default</span> App;
</div>
<div class="ln" style="left:1122.5px;width:30px;text-align:right;top:283.00px">1</div>
<div class="ln" style="left:1122.5px;width:30px;text-align:right;top:308.00px">2</div>
<div class="ln" style="left:1122.5px;width:30px;text-align:right;top:333.00px">3</div>
<div class="ln" style="left:1122.5px;width:30px;text-align:right;top:358.00px">4</div>
<div class="ln" style="left:1122.5px;width:30px;text-align:right;top:383.00px">5</div>
<div class="ln" style="left:1122.5px;width:30px;text-align:right;top:408.00px">6</div>
<div class="ln" style="left:1122.5px;width:30px;text-align:right;top:433.00px">7</div>
<div class="ln" style="left:1122.5px;width:30px;text-align:right;top:458.00px">8</div>
<div class="ln" style="left:1122.5px;width:30px;text-align:right;top:483.00px">9</div>
<div class="ln" style="left:1122.5px;width:30px;text-align:right;top:533.00px">10</div>
<div class="ln" style="left:1122.5px;width:30px;text-align:right;top:558.00px">11</div>
<div class="ln" style="left:1122.5px;width:30px;text-align:right;top:583.00px">12</div>
<div class="ln" style="left:1122.5px;width:30px;text-align:right;top:608.00px">13</div>
<div class="ln" style="left:1122.5px;width:30px;text-align:right;top:633.00px">14</div>
<div class="ln" style="left:1122.5px;width:30px;text-align:right;top:658.00px">15</div>
<div class="ln" style="left:1122.5px;width:30px;text-align:right;top:683.00px">16</div>
<div class="ln" style="left:1122.5px;width:30px;text-align:right;top:708.00px">17</div>
</body></html>
